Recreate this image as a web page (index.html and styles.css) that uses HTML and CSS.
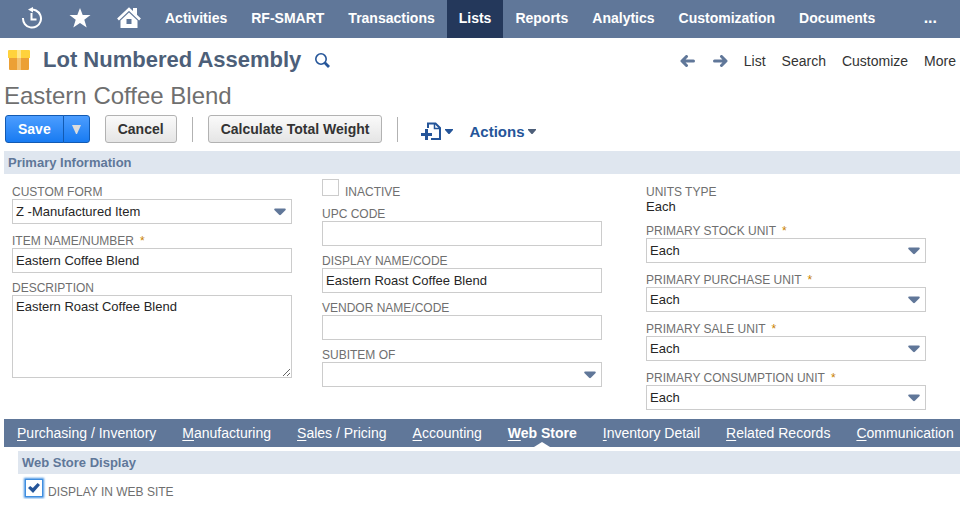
FILE: index.html
```html
<!DOCTYPE html>
<html lang="en">
<head>
<meta charset="utf-8">
<meta name="viewport" content="width=device-width, initial-scale=1">
<title>Lot Numbered Assembly</title>
<link rel="stylesheet" href="styles.css">
</head>
<body>
<svg class="defs" aria-hidden="true">
  <symbol id="caret" viewBox="0 0 12 8"><path d="M1.200 0.500h9.600q1.400 0.300 0.800 1.400L6.900 6.800q-0.900 0.800-1.800 0L0.400 1.900Q-0.200 0.800 1.200 0.500z"/></symbol>
  <symbol id="small-caret" viewBox="0 0 8 5"><path d="M0 0h8v1L4.500 5h-1L0 1z"/></symbol>
  <symbol id="arrow" viewBox="0 0 15 12"><path d="M6.500 1.500L2 6L6.500 10.500M2.500 6h11" fill="none" stroke="currentColor" stroke-width="3" stroke-linecap="round" stroke-linejoin="round"/></symbol>
</svg>

<nav class="nav" aria-label="Main">
  <div class="nav-icons">
    <a href="#" aria-label="Recent records"><svg width="22" height="22" viewBox="0 0 22 22" fill="none" stroke="#fff"><path d="M2 11A9 9 0 1 0 15 3.500Q13 2.500 10 2.500" stroke-width="2"/><path d="M7 2.500L12 0v5.500z" fill="#fff" stroke="none"/><path d="M10.500 6v6.500h5" stroke-width="2"/></svg></a>
    <a href="#" aria-label="Shortcuts"><svg width="22" height="20" viewBox="0 0 22 20" fill="#fff"><path d="M11 0l2.700 7H21.500l-6.200 4.700L17.700 19.500 11 15 4.300 19.500 6.700 11.700.5 7h7.800z"/></svg></a>
    <a href="#" aria-label="Home"><svg width="24" height="22" viewBox="0 0 24 22"><path d="M1 12.500L12 2l11 10.500" fill="none" stroke="#fff" stroke-width="2.600"/><path d="M16 1h4v8l-4-4z" fill="#fff"/><path d="M12 5.500l8.500 8V21h-17v-7.500zM9.500 12v5h5v-5z" fill="#fff" fill-rule="evenodd"/></svg></a>
  </div>
  <a class="nav-link" href="#">Activities</a>
  <a class="nav-link" href="#">RF-SMART</a>
  <a class="nav-link" href="#">Transactions</a>
  <a class="nav-link active" href="#" aria-current="page">Lists</a>
  <a class="nav-link" href="#">Reports</a>
  <a class="nav-link" href="#">Analytics</a>
  <a class="nav-link" href="#">Customization</a>
  <a class="nav-link" href="#">Documents</a>
  <a class="nav-link more" href="#">...</a>
</nav>

<main>
  <header class="title-row">
    <svg width="22" height="20" viewBox="0 0 22 20" aria-hidden="true"><path d="M1 8h20v11q0 1-1 1H2q-1 0-1-1z" fill="#eca035"/><path d="M1 0h20q1 0 1 1v7H0V1q0-1 1-1z" fill="#ffd23c"/><path d="M9 0h4v8H9z" fill="#ffe68c"/><path d="M9 8h4v12H9z" fill="#f4c272"/></svg>
    <h1>Lot Numbered Assembly</h1>
    <a class="find" href="#" aria-label="Search records"><svg width="15" height="15" viewBox="0 0 15 15" fill="none" stroke="#255599"><circle cx="6" cy="6" r="5.200" stroke-width="1.600"/><path d="M9.800 9.800l4.200 4.200" stroke-width="2.800"/></svg></a>
    <div class="page-links">
      <a href="#" aria-label="Previous"><svg class="arrow" width="15" height="12"><use href="#arrow"/></svg></a>
      <a href="#" aria-label="Next"><svg class="arrow next" width="15" height="12"><use href="#arrow"/></svg></a>
      <a href="#">List</a>
      <a href="#">Search</a>
      <a href="#">Customize</a>
      <a href="#">More</a>
    </div>
  </header>
  <h2 class="record-name">Eastern Coffee Blend</h2>

  <div class="toolbar">
    <div class="split">
      <button class="btn primary" type="button">Save</button>
      <button class="btn primary drop" type="button" aria-label="More save options"><svg width="9" height="9" viewBox="0 0 9 9" fill="#dcdcdc"><path d="M0 0h9L5 9H4z"/></svg></button>
    </div>
    <button class="btn" type="button">Cancel</button>
    <span class="divider"></span>
    <button class="btn" type="button">Calculate Total Weight</button>
    <span class="divider"></span>
    <div class="menus">
      <button class="menu" type="button" aria-label="Create new"><svg width="20" height="19" viewBox="0 0 20 19" fill="none" stroke="#255599" stroke-width="2"><path d="M7 6V1.500h7.500L19 6v11H10"/><path d="M13.500 1v5.500H19" stroke-width="1.500"/><path d="M5.500 7v11M0 12.500h11" stroke-width="3"/></svg><svg class="mini" width="8" height="5"><use href="#small-caret"/></svg></button>
      <button class="menu" type="button">Actions<svg class="mini grey" width="8" height="5"><use href="#small-caret"/></svg></button>
    </div>
  </div>

  <section>
    <h3 class="section-title">Primary Information</h3>
    <form class="fields">
      <div class="column">
        <div class="field"><label for="form">CUSTOM FORM</label>
          <div class="pick"><select id="form"><option>Z -Manufactured Item</option></select><svg width="12" height="8"><use href="#caret"/></svg></div></div>
        <div class="field required"><label for="name">ITEM NAME/NUMBER</label><input id="name" type="text" value="Eastern Coffee Blend"></div>
        <div class="field"><label for="description">DESCRIPTION</label><textarea id="description">Eastern Roast Coffee Blend</textarea></div>
      </div>
      <div class="column">
        <div class="check"><input id="inactive" type="checkbox"><label for="inactive">INACTIVE</label></div>
        <div class="field"><label for="upc">UPC CODE</label><input id="upc" type="text"></div>
        <div class="field"><label for="display">DISPLAY NAME/CODE</label><input id="display" type="text" value="Eastern Roast Coffee Blend"></div>
        <div class="field"><label for="vendor">VENDOR NAME/CODE</label><input id="vendor" type="text"></div>
        <div class="field"><label for="subitem">SUBITEM OF</label>
          <div class="pick"><select id="subitem"><option></option></select><svg width="12" height="8"><use href="#caret"/></svg></div></div>
      </div>
      <div class="column">
        <div class="field"><label for="units">UNITS TYPE</label><output id="units">Each</output></div>
        <div class="field required"><label for="stock">PRIMARY STOCK UNIT</label>
          <div class="pick"><select id="stock"><option>Each</option></select><svg width="12" height="8"><use href="#caret"/></svg></div></div>
        <div class="field required"><label for="purchase">PRIMARY PURCHASE UNIT</label>
          <div class="pick"><select id="purchase"><option>Each</option></select><svg width="12" height="8"><use href="#caret"/></svg></div></div>
        <div class="field required"><label for="sale">PRIMARY SALE UNIT</label>
          <div class="pick"><select id="sale"><option>Each</option></select><svg width="12" height="8"><use href="#caret"/></svg></div></div>
        <div class="field required"><label for="consumption">PRIMARY CONSUMPTION UNIT</label>
          <div class="pick"><select id="consumption"><option>Each</option></select><svg width="12" height="8"><use href="#caret"/></svg></div></div>
      </div>
    </form>
  </section>

  <nav class="tabs" aria-label="Record sections">
    <a href="#"><u>P</u>urchasing / Inventory</a>
    <a href="#"><u>M</u>anufacturing</a>
    <a href="#"><u>S</u>ales / Pricing</a>
    <a href="#"><u>A</u>ccounting</a>
    <a class="selected" href="#" aria-current="true"><u>W</u>eb Store</a>
    <a href="#"><u>I</u>nventory Detail</a>
    <a href="#"><u>R</u>elated Records</a>
    <a href="#"><u>C</u>ommunication</a>
  </nav>

  <section class="panel">
    <h3 class="section-title">Web Store Display</h3>
    <div class="check"><input class="focused" id="website" type="checkbox" checked><label for="website">DISPLAY IN WEB SITE</label></div>
  </section>
</main>
</body>
</html>
```
FILE: styles.css
```css
* { box-sizing: border-box; }

body {
  margin: 0;
  background: #fff;
  color: #262626;
  font-family: "Liberation Sans", Arial, sans-serif;
  font-size: 14px;
  overflow-x: hidden;
}

a { color: inherit; text-decoration: none; }
h1, h2, h3 { margin: 0; }
svg { display: block; flex: none; }
button, input, select, textarea { font-family: inherit; }
.defs { position: absolute; width: 0; height: 0; }

/* Main navigation */
.nav {
  display: flex;
  height: 38px;
  background: #607799;
  color: #fff;
}
.nav-icons {
  display: flex;
  align-items: center;
  gap: 26px;
  padding: 0 12px 2px 21px;
}
.nav-link {
  padding: 0 12px;
  font-weight: bold;
  line-height: 36px;
}
.nav-link.active { background: #24385b; }
.nav-link.more { margin-left: auto; padding-right: 23px; font-size: 16px; }

/* Page heading */
.title-row {
  display: flex;
  align-items: center;
  height: 44px;
  padding: 0 4px 0 8px;
}
.title-row h1 {
  margin-left: 13px;
  color: #4d5f79;
  font-size: 22px;
  line-height: 26px;
}
.find { margin-left: 14px; }
.page-links {
  display: flex;
  align-items: center;
  gap: 16px;
  margin-left: auto;
  padding-top: 2px;
  color: #333;
  line-height: 16px;
}
.arrow { color: #607799; }
.arrow.next { transform: scaleX(-1); }
.page-links a:first-child { margin-right: 2px; }
.record-name {
  padding-left: 4px;
  color: #6f6f6f;
  font-size: 24px;
  font-weight: normal;
  line-height: 28px;
}

/* Buttons */
.toolbar {
  display: flex;
  align-items: center;
  gap: 15px;
  padding: 5px 5px 8px;
}
.split { display: flex; }
.btn {
  height: 28px;
  padding: 0 12px;
  border: 1px solid #b2b2b2;
  border-radius: 3px;
  background: linear-gradient(#fafafa, #e5e5e5);
  color: #333;
  font-size: 14px;
  font-weight: bold;
}
.btn.primary {
  padding: 0 12px;
  border-color: #125ab2;
  border-radius: 3px 0 0 3px;
  background: linear-gradient(#4c9dff, #187bf2);
  color: #fff;
}
.btn.drop {
  margin-left: -1px;
  padding: 0 8px;
  border-radius: 0 3px 3px 0;
}
.divider { width: 1px; height: 25px; background: #b2b2b2; }
.menus {
  display: flex;
  align-items: center;
  gap: 16px;
  padding: 5px 0 0 8px;
}
.menu {
  display: flex;
  align-items: center;
  gap: 4px;
  padding: 0;
  border: 0;
  background: none;
  color: #255599;
  font-size: 15px;
  font-weight: bold;
  line-height: 18px;
}
.mini { fill: #255599; }
.mini.grey { fill: #4d5f79; }

/* Sections and fields */
.section-title {
  margin-left: 4px;
  padding-left: 4px;
  background: #dfe6ef;
  color: #607799;
  font-size: 13px;
  line-height: 23px;
}
.fields {
  display: grid;
  grid-template-columns: 310fr 324fr 314fr;
  padding: 5px 0 9px 12px;
}
.column {
  display: flex;
  flex-direction: column;
  gap: 8px;
  max-width: 280px;
}
.column > .field:first-child { padding-top: 6px; }
label {
  color: #6f6f6f;
  font-size: 12px;
  line-height: 14px;
}
.field label { display: block; }
.required label { padding-top: 2px; }
.required label::after {
  content: "*";
  margin-left: 6px;
  color: #c97f00;
}
.field input, .field select, .field textarea {
  display: block;
  width: 100%;
  height: 25px;
  margin: 0;
  padding: 0 3px;
  border: 1px solid #ccc;
  border-radius: 0;
  background: #fff;
  color: #262626;
  font-size: 13px;
}
.field select { appearance: none; }
.field textarea {
  height: 83px;
  padding: 3px;
  line-height: 15px;
}
.field output { display: block; font-size: 13px; line-height: 15px; }
.pick { position: relative; }
.pick svg {
  position: absolute;
  top: 9px;
  right: 6px;
  fill: #607799;
  pointer-events: none;
}
.check {
  display: flex;
  align-items: flex-end;
  gap: 6px;
  height: 20px;
}
.check input {
  display: grid;
  place-items: center;
  appearance: none;
  width: 17px;
  height: 17px;
  margin: 0 0 3px;
  border: 1px solid #ccc;
  background: #fff;
}
.check input:checked::before {
  content: "";
  width: 12px;
  height: 10px;
  background: #255599;
  clip-path: polygon(0 50%, 18% 30%, 40% 50%, 80% 0, 100% 20%, 42% 100%);
}
.check .focused {
  width: 18px;
  height: 18px;
  margin-bottom: 2px;
  border-color: #3f8ee0;
  outline: none;
  box-shadow: 0 0 2px 1px #3f8ee0;
}

/* Tabs */
.tabs {
  display: flex;
  margin-left: 4px;
  background: #607799;
  color: #fff;
  line-height: 28px;
  white-space: nowrap;
  overflow: hidden;
}
.tabs a { padding: 0 13px; }
.tabs u { text-underline-offset: 2px; }
.tabs .selected { position: relative; font-weight: bold; }
.tabs .selected::after {
  content: "";
  position: absolute;
  bottom: 0;
  left: 50%;
  margin-left: -8px;
  border: 8px solid transparent;
  border-top: 0;
  border-bottom: 5px solid #fff;
}
.panel { padding: 4px 0 0 14px; }
.panel .check {
  gap: 5px;
  height: 25px;
  padding-left: 11px;
}
```
